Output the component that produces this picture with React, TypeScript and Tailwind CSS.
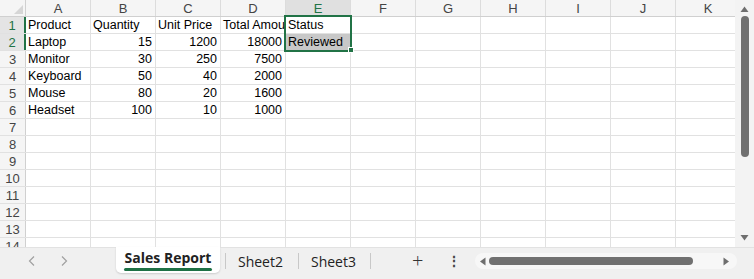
import React from 'react';

const columns = ['A', 'B', 'C', 'D', 'E', 'F', 'G', 'H', 'I', 'J', 'K'];

type Cell = { v: string; num?: boolean };

const data: Cell[][] = [
  [{ v: 'Product' }, { v: 'Quantity' }, { v: 'Unit Price' }, { v: 'Total Amount' }, { v: 'Status' }],
  [{ v: 'Laptop' }, { v: '15', num: true }, { v: '1200', num: true }, { v: '18000', num: true }, { v: 'Reviewed' }],
  [{ v: 'Monitor' }, { v: '30', num: true }, { v: '250', num: true }, { v: '7500', num: true }],
  [{ v: 'Keyboard' }, { v: '50', num: true }, { v: '40', num: true }, { v: '2000', num: true }],
  [{ v: 'Mouse' }, { v: '80', num: true }, { v: '20', num: true }, { v: '1600', num: true }],
  [{ v: 'Headset' }, { v: '100', num: true }, { v: '10', num: true }, { v: '1000', num: true }],
];

const rowCount = 14;

export default function App() {
  return (
    <div className="w-[754px] h-[279px] flex flex-col bg-white overflow-hidden font-['Liberation_Sans',Arial,sans-serif] text-[#000]">
      <div className="flex flex-1 min-h-0">
        {/* sheet grid */}
        <div className="relative flex-1 overflow-hidden">
          <div className="flex h-[17px] bg-[#f5f5f5] border-b border-[#d0d0d0]">
            <div className="relative w-[26px] shrink-0 border-r border-[#d0d0d0]">
              <div className="absolute right-[2px] bottom-[2px] w-0 h-0 border-l-[9px] border-l-transparent border-b-[9px] border-b-[#d6d6d6]" />
            </div>
            {columns.map((c) => (
              <div
                key={c}
                className={`w-[65px] shrink-0 border-r border-[#dcdcdc] flex items-center justify-center text-[13px] leading-none ${c === 'E' ? 'bg-[#e0e0e0] text-[#217346]' : 'text-[#444]'}`}
              >
                {c}
              </div>
            ))}
          </div>

          {Array.from({ length: rowCount }).map((_, r) => {
            const rowData = data[r] || [];
            const sel = r < 2;
            return (
              <div key={r} className="flex h-[17px] border-b border-[#e1e1e1]">
                <div
                  className={`w-[26px] shrink-0 flex items-center justify-center text-[13px] leading-none ${sel ? 'bg-[#e4e4e4] text-[#217346] border-r-2 border-[#217346]' : 'bg-[#f5f5f5] text-[#444] border-r border-[#d0d0d0]'}`}
                >
                  {r + 1}
                </div>
                {columns.map((c, ci) => {
                  const cell = rowData[ci];
                  return (
                    <div
                      key={c}
                      className={`w-[65px] shrink-0 border-r border-[#e1e1e1] flex items-center text-[12.5px] leading-none whitespace-nowrap overflow-hidden ${cell?.num ? 'justify-end pr-[3px]' : 'pl-[2px]'} ${r === 1 && c === 'E' ? 'bg-[#c8c8c8]' : ''}`}
                    >
                      {cell?.v}
                    </div>
                  );
                })}
              </div>
            );
          })}

          {/* selection E1:E2 */}
          <div className="absolute left-[284px] top-[15px] w-[68px] h-[37px] border-2 border-[#217346] pointer-events-none" />
          <div className="absolute left-[348px] top-[47px] w-[6px] h-[6px] bg-[#217346] border border-white" />
        </div>

        {/* vertical scrollbar */}
        <div className="w-[19px] shrink-0 bg-[#f3f3f3] flex flex-col items-center py-[4px]">
          <svg width="9" height="7" viewBox="0 0 9 7" className="mt-[2px]">
            <path d="M4.5 0.5 L8.5 6 L0.5 6 Z" fill="#6e6e6e" />
          </svg>
          <div className="mt-[3px] w-[8px] h-[141px] rounded-full bg-[#707070]" />
          <div className="flex-1" />
          <svg width="9" height="7" viewBox="0 0 9 7" className="mb-[2px]">
            <path d="M0.5 1 L8.5 1 L4.5 6.5 Z" fill="#6e6e6e" />
          </svg>
        </div>
      </div>

      {/* sheet tabs bar */}
      <div className="h-[32px] shrink-0 bg-[#f0f0f0] border-t border-[#e2e2e2] flex items-start font-['Open_Sans','Noto_Sans',sans-serif] text-[14px] text-[#222]">
        <div className="w-[116px] shrink-0 flex items-center h-[26px] pl-[26px] gap-[20px] text-[#9a9a9a]">
          <svg width="12" height="12" viewBox="0 0 12 12">
            <path d="M8 1.5 L3.5 6 L8 10.5" stroke="#a0a0a0" strokeWidth="1.2" fill="none" />
          </svg>
          <svg width="12" height="12" viewBox="0 0 12 12">
            <path d="M4 1.5 L8.5 6 L4 10.5" stroke="#a0a0a0" strokeWidth="1.2" fill="none" />
          </svg>
        </div>
        <div className="-mt-px w-[104px] h-[26px] bg-white rounded-b-[5px] shadow-[0_1px_2px_rgba(0,0,0,0.15)] flex flex-col items-center justify-center">
          <span className="font-bold text-[14px] leading-[16px] text-[#222]">Sales Report</span>
          <div className="mt-[2px] w-[88px] h-[3px] rounded-full bg-[#1e7145]" />
        </div>
        <div className="flex items-center h-[26px]">
          <div className="ml-[5px] w-px h-[16px] bg-[#c8c8c8]" />
          <span className="ml-[12px] w-[60px]">Sheet2</span>
          <div className="w-px h-[16px] bg-[#c8c8c8]" />
          <span className="ml-[12px] w-[59px]">Sheet3</span>
          <div className="w-px h-[16px] bg-[#c8c8c8]" />
          <span className="ml-[41px] text-[20px] font-light leading-none text-[#333]">+</span>
          <span className="ml-[24px] text-[14px] font-bold leading-none text-[#444]">⋮</span>
        </div>
        <div className="ml-[14px] mt-[5px] w-[262px] h-[16px] rounded-full bg-[#f7f7f7] flex items-center px-[4px]">
          <svg width="7" height="9" viewBox="0 0 7 9">
            <path d="M6.5 0.5 L6.5 8.5 L1 4.5 Z" fill="#6e6e6e" />
          </svg>
          <div className="ml-[3px] w-[204px] h-[8px] rounded-full bg-[#707070]" />
          <div className="flex-1" />
          <svg width="7" height="9" viewBox="0 0 7 9" className="mr-[3px]">
            <path d="M0.5 0.5 L6 4.5 L0.5 8.5 Z" fill="#6e6e6e" />
          </svg>
        </div>
      </div>
    </div>
  );
}
